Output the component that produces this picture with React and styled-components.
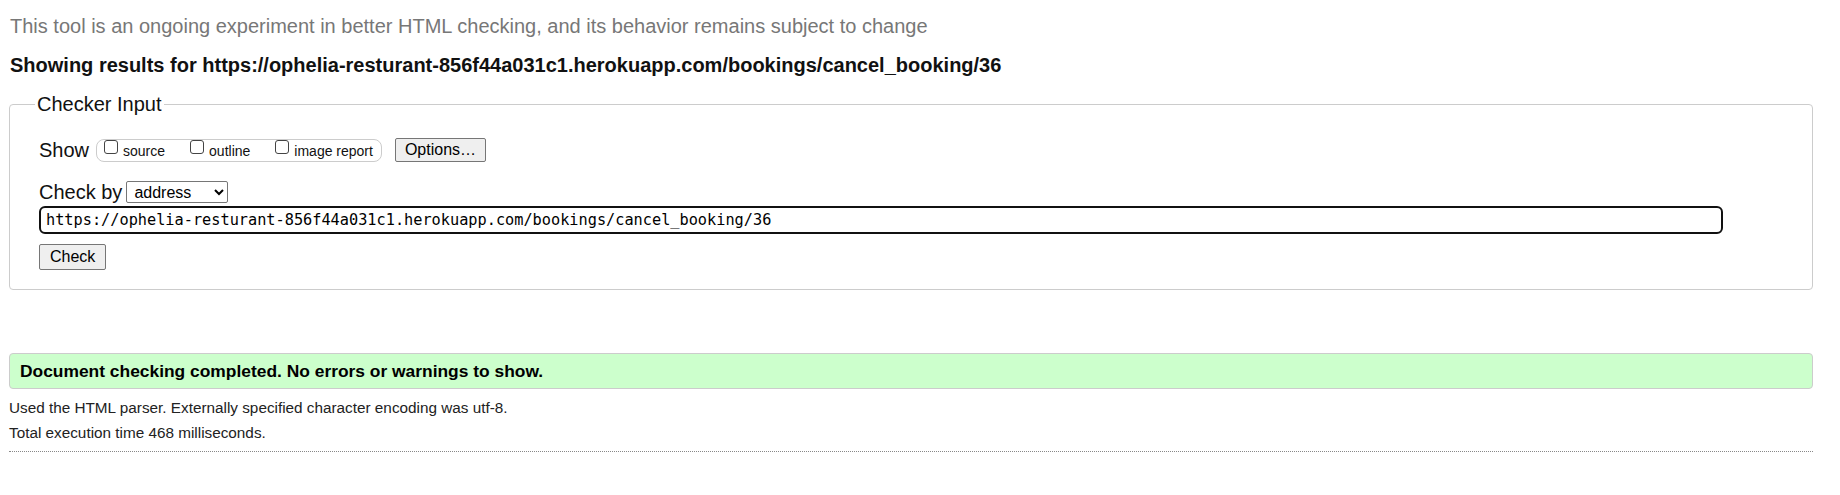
import React from "react";
import styled, { createGlobalStyle } from "styled-components";

const GlobalStyle = createGlobalStyle`
  body {
    margin: 0;
    background: #fff;
    font-family: Arial, "Liberation Sans", sans-serif;
    color: #111;
  }
`;

const Page = styled.div`
  width: 1804px;
  margin-left: 9px;
  padding-top: 15px;
`;

const Intro = styled.p`
  margin: 0;
  font-size: 20px;
  line-height: 23px;
  color: #777;
  padding-left: 1px;
`;

const Heading = styled.h2`
  margin: 16px 0 16px;
  font-size: 20px;
  line-height: 23px;
  font-weight: bold;
  color: #111;
  padding-left: 1px;
`;

const Fieldset = styled.fieldset`
  margin: 0;
  padding: 22px 28px 19px 29px;
  border: 1px solid #ccc;
  border-radius: 4px;
  min-inline-size: 0;
`;

const Legend = styled.legend`
  margin-left: -4px;
  padding: 0 2px;
  font-size: 20px;
  line-height: 23px;
  color: #111;
`;

const Row = styled.div`
  display: flex;
  align-items: center;
  height: ${p => p.h}px;
  margin-top: ${p => p.top || 0}px;
`;

const Label = styled.span`
  font-size: 20px;
  line-height: 23px;
  color: #111;
  margin-right: ${p => p.gap}px;
`;

const Group = styled.div`
  display: flex;
  align-items: flex-start;
  gap: 25px;
  box-sizing: border-box;
  height: 23px;
  padding: 0 8px 0 7px;
  border: 1px solid #ccc;
  border-radius: 8px;
`;

const Option = styled.label`
  display: flex;
  align-items: flex-start;
  gap: 5px;
  font-size: 14px;
  line-height: 23px;
  color: #111;
`;

const Box = styled.input`
  appearance: none;
  box-sizing: border-box;
  width: 14px;
  height: 14px;
  margin: 0;
  border: 1px solid #444;
  border-radius: 3px;
  background: #fff;
`;

const Button = styled.button`
  box-sizing: border-box;
  height: ${p => p.h}px;
  margin-left: ${p => p.left || 0}px;
  padding: 0 ${p => p.pad}px;
  font-family: Arial, "Liberation Sans", sans-serif;
  font-size: 16px;
  color: #000;
  background: #efefef;
  border: 1px solid #767676;
  border-radius: 2px;
`;

const Select = styled.select`
  box-sizing: border-box;
  width: 102px;
  height: 22px;
  padding: 0 0 0 3px;
  font-family: Arial, "Liberation Sans", sans-serif;
  font-size: 16px;
  color: #000;
  background: #fff;
  border: 1px solid #767676;
  border-radius: 2px;
`;

const UrlInput = styled.input`
  display: block;
  box-sizing: border-box;
  width: 1684px;
  height: 28px;
  margin-top: 3px;
  padding: 0 0 0 5px;
  font-family: "DejaVu Sans Mono", "Liberation Mono", monospace;
  font-size: 15.25px;
  color: #000;
  background: #fff;
  border: 2px solid #111;
  border-radius: 6px;
  outline: none;
`;

const Notice = styled.div`
  margin-top: 63px;
  box-sizing: border-box;
  height: 36px;
  padding: 0 10px;
  font-size: 17.4px;
  line-height: 34px;
  font-weight: bold;
  color: #000;
  background: #ccffcc;
  border: 1px solid #ccc;
  border-radius: 4px;
`;

const Details = styled.div`
  margin-top: 6px;
`;

const Line = styled.p`
  margin: 0;
  font-size: 15.3px;
  line-height: 25px;
  color: #222;
`;

const Rule = styled.hr`
  margin: 6px 0 0;
  border: 0;
  border-top: 1px dotted #888;
`;

const url = "https://ophelia-resturant-856f44a031c1.herokuapp.com/bookings/cancel_booking/36";

export default function App() {
  return (
    <Page>
      <GlobalStyle />
      <Intro>
        This tool is an ongoing experiment in better HTML checking, and its behavior remains subject to change
      </Intro>
      <Heading>Showing results for {url}</Heading>

      <Fieldset>
        <Legend>Checker Input</Legend>
        <Row h={24}>
          <Label gap={7}>Show</Label>
          <Group>
            <Option><Box type="checkbox" />source</Option>
            <Option><Box type="checkbox" />outline</Option>
            <Option><Box type="checkbox" />image report</Option>
          </Group>
          <Button type="button" h={24} pad={9} left={13}>Options…</Button>
        </Row>
        <Row h={22} top={19}>
          <Label gap={4}>Check by</Label>
          <Select defaultValue="address">
            <option value="address">address</option>
            <option value="upload">file upload</option>
            <option value="text">text input</option>
          </Select>
        </Row>
        <UrlInput type="url" defaultValue={url} readOnly />
        <Row h={26} top={10}>
          <Button type="button" h={26} pad={10}>Check</Button>
        </Row>
      </Fieldset>

      <Notice>Document checking completed. No errors or warnings to show.</Notice>
      <Details>
        <Line>Used the HTML parser. Externally specified character encoding was utf-8.</Line>
        <Line>Total execution time 468 milliseconds.</Line>
      </Details>
      <Rule />
    </Page>
  );
}
